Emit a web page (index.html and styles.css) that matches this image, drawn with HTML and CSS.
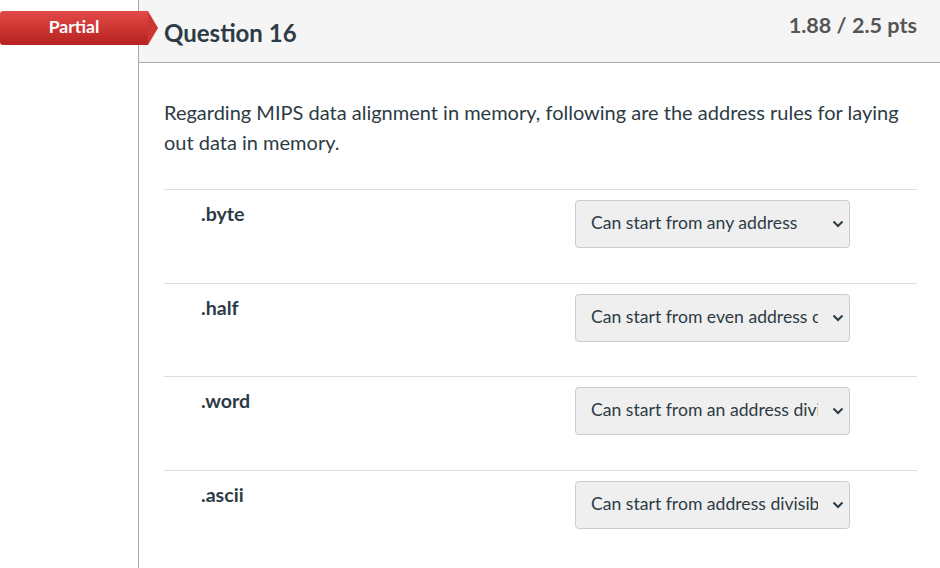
FILE: index.html
```html
<!DOCTYPE html>
<html lang="en">
<head>
  <meta charset="UTF-8" />
  <title>Question 16</title>
  <link rel="stylesheet" href="styles.css">
</head>
<body>
  <div class="quiz">
    <div class="gutter">
      <div class="badge">Partial</div>
    </div>

    <div class="question">
      <div class="header">
        <h3 class="title">Question 16</h3>
        <div class="points">1.88 / 2.5 pts</div>
      </div>

      <div class="body">
        <p class="text">Regarding MIPS data alignment in memory, following are the address rules for laying out data in memory.</p>

        <div class="answers">
          <div class="row">
            <div class="label">.byte</div>
            <div class="selectWrap">
              <select class="pick">
                <option>Can start from any address</option>
              </select>
              <svg class="chevron" width="12" height="8" viewBox="0 0 12 8"><path d="M1.5 1.5 L6 6 L10.5 1.5" fill="none" stroke="#2d3b45" stroke-width="2"/></svg>
            </div>
          </div>
          <div class="row">
            <div class="label">.half</div>
            <div class="selectWrap">
              <select class="pick">
                <option>Can start from even address only</option>
              </select>
              <svg class="chevron" width="12" height="8" viewBox="0 0 12 8"><path d="M1.5 1.5 L6 6 L10.5 1.5" fill="none" stroke="#2d3b45" stroke-width="2"/></svg>
            </div>
          </div>
          <div class="row">
            <div class="label">.word</div>
            <div class="selectWrap">
              <select class="pick">
                <option>Can start from an address divisible by 4</option>
              </select>
              <svg class="chevron" width="12" height="8" viewBox="0 0 12 8"><path d="M1.5 1.5 L6 6 L10.5 1.5" fill="none" stroke="#2d3b45" stroke-width="2"/></svg>
            </div>
          </div>
          <div class="row">
            <div class="label">.ascii</div>
            <div class="selectWrap">
              <select class="pick">
                <option>Can start from address divisible by 8</option>
              </select>
              <svg class="chevron" width="12" height="8" viewBox="0 0 12 8"><path d="M1.5 1.5 L6 6 L10.5 1.5" fill="none" stroke="#2d3b45" stroke-width="2"/></svg>
            </div>
          </div>
        </div>
      </div>
    </div>
  </div>
</body>
</html>
```

FILE: styles.css
```css
/* Base */
body {
  margin: 0;
  background: #fff;
  color: #2d3b45;
  font-family: Lato, "Open Sans", sans-serif;
}

.quiz {
  display: flex;
  min-height: 568px;
}

.gutter {
  position: relative;
  width: 138px;
  flex-shrink: 0;
  border-right: 1px solid #aaa;
}

/* Red "Partial" ribbon sits over the gutter line */
.badge {
  position: absolute;
  top: 11px;
  left: 0;
  width: 148px;
  height: 34px;
  line-height: 31px;
  box-sizing: border-box;
  text-align: center;
  color: #fff;
  font-size: 17.6px;
  font-weight: 700;
  background: linear-gradient(#e34a47, #b5221f);
  border-radius: 3px 0 0 3px;
  z-index: 2;
}

.badge::after {
  content: "";
  position: absolute;
  top: 0;
  right: -10px;
  border-top: 17px solid transparent;
  border-bottom: 17px solid transparent;
  border-left: 10px solid #cd3632;
}

.question {
  flex: 1;
}

.header {
  display: flex;
  justify-content: space-between;
  align-items: flex-start;
  height: 62px;
  padding: 0 23px 0 25px;
  background: #f5f5f5;
  border-bottom: 1px solid #aaa;
}

.title {
  margin: 18px 0 0;
  font-size: 24px;
  font-weight: 700;
  line-height: 30px;
  color: #2d3b45;
}

.points {
  margin-top: 11px;
  font-size: 21.6px;
  font-weight: 700;
  line-height: 28px;
  color: #555;
}

.body {
  padding: 34px 23px 0 25px;
}

.text {
  margin: 0 0 32px;
  font-size: 20px;
  line-height: 30px;
}

.row {
  display: flex;
  justify-content: space-between;
  height: 92.67px;
  border-top: 1px solid #ddd;
}

.label {
  padding: 10px 0 0 37px;
  font-size: 19.6px;
  font-weight: 700;
  line-height: 27px;
}

.selectWrap {
  position: relative;
  margin: 10px 67px 0 0;
  width: 275px;
  height: 48px;
}

.pick {
  appearance: none;
  -webkit-appearance: none;
  width: 100%;
  height: 100%;
  padding: 0 31px 3px 15px;
  border: 1px solid #c7cdd1;
  border-radius: 4px;
  background: #efefef;
  color: #2d3b45;
  font-family: Lato, "Open Sans", sans-serif;
  font-size: 17.6px;
}

.chevron {
  position: absolute;
  right: 6px;
  top: 20px;
  pointer-events: none;
}
```
